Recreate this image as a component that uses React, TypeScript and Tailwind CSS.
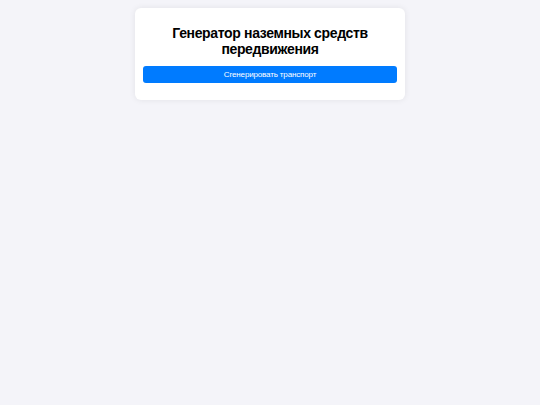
export default function App() {
  return (
    <div
      className="min-h-[405px] w-full bg-[#f4f4f9] pt-2"
      style={{ fontFamily: '"Liberation Sans", Arial, sans-serif' }}
    >
      <div className="mx-auto w-[270px] rounded-md bg-white px-2 pt-[17px] pb-[17px] shadow-[0_0_6px_rgba(0,0,0,0.08)]">
        <h1 className="mb-[9px] text-center text-[14px] leading-[16px] font-bold tracking-[-0.35px] text-black">
          Генератор наземных средств передвижения
        </h1>
        <button className="block h-[17px] w-full rounded-[3px] bg-[#007bff] text-[8px] tracking-[-0.15px] text-white">
          Сгенерировать транспорт
        </button>
      </div>
    </div>
  );
}
